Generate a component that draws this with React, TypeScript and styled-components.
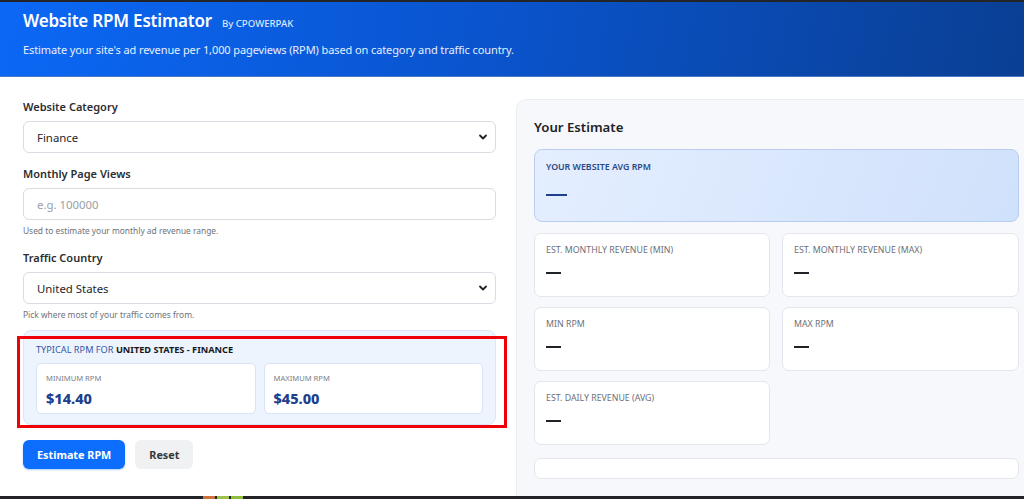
import styled, { createGlobalStyle } from "styled-components";

const GlobalStyle = createGlobalStyle`
  html, body {
    margin: 0;
    padding: 0;
    background: #ffffff;
    font-family: "Noto Sans", "Open Sans", Arial, sans-serif;
    color: #222;
  }
  * { box-sizing: border-box; }
`;

const Page = styled.div`
  position: relative;
  width: 1024px;
  height: 499px;
  overflow: hidden;
  border-top: 2px solid #232427;
  background: #fff;
`;

const Header = styled.header`
  height: 75px;
  padding: 7px 23px 0;
  background: linear-gradient(100deg, #0b68f5 0%, #0a55d0 45%, #0a3f93 100%);
  border-bottom: 1px solid #4a78c4;
  color: #fff;
`;

const TitleRow = styled.div`
  display: flex;
  align-items: baseline;
  gap: 10px;
`;

const Title = styled.h1`
  margin: 0;
  font-size: 17px;
  font-weight: 600;
  letter-spacing: -0.2px;
`;

const Byline = styled.span`
  font-size: 9.6px;
  font-weight: 500;
  color: #dbe6fb;
`;

const Subtitle = styled.p`
  margin: 10px 0 0;
  font-size: 11px;
  letter-spacing: -0.1px;
  color: #e8efff;
`;

const Main = styled.main`
  display: flex;
  gap: 20px;
  padding: 22px 0 0 23px;
`;

const Form = styled.section`
  width: 473px;
  flex-shrink: 0;
  display: flex;
  flex-direction: column;
`;

const Field = styled.div<{ $mb?: number }>`
  display: flex;
  flex-direction: column;
  margin-bottom: ${(p) => p.$mb ?? 13}px;
`;

const Label = styled.label`
  font-size: 11px;
  font-weight: 600;
  color: #2b2d31;
  margin-bottom: 7px;
`;

const Control = styled.div`
  position: relative;
  height: 32px;
  border: 1px solid #d8dce3;
  border-radius: 6px;
  background: #fff;
  display: flex;
  align-items: center;
  padding: 0 13px;
  font-size: 11.4px;
  color: #23262b;
`;

const Placeholder = styled.span`
  color: #9aa0a8;
`;

const Chevron = styled.svg`
  margin-left: auto;
  margin-right: -6px;
`;

const Hint = styled.div`
  margin-top: 5px;
  font-size: 8.4px;
  color: #6d727a;
`;

const TypicalBox = styled.div`
  position: relative;
  margin-top: 10px;
  padding: 10px 12px 10px;
  background: #eef4fe;
  border: 1px solid #d9e5fa;
  border-radius: 8px;
`;

const TypicalHead = styled.div`
  font-size: 9.2px;
  color: #2f57a8;
  text-transform: uppercase;
  margin-top: 2px;
  margin-bottom: 7px;

  b {
    color: #15181d;
    font-weight: 700;
  }
`;

const RangeGrid = styled.div`
  display: grid;
  grid-template-columns: 1fr 1fr;
  gap: 8px;
`;

const RangeCard = styled.div`
  height: 51px;
  background: #fff;
  border: 1px solid #d9e3f6;
  border-radius: 5px;
  padding: 9px 9px 0;
`;

const RangeLabel = styled.div`
  font-size: 7.6px;
  color: #7a7f88;
  text-transform: uppercase;
`;

const RangeValue = styled.div`
  margin-top: 5px;
  font-size: 14.5px;
  font-weight: 800;
  color: #1d3f8d;
`;

const Annotation = styled.div`
  position: absolute;
  top: 5px;
  left: -7px;
  right: -12px;
  bottom: -4px;
  border: 3px solid #f00008;
  pointer-events: none;
`;

const Actions = styled.div`
  display: flex;
  gap: 10px;
  margin-top: 15px;
`;

const Button = styled.button<{ $primary?: boolean }>`
  height: 29px;
  padding: 0 14px;
  border: none;
  border-radius: 6px;
  font-family: inherit;
  font-size: 10.8px;
  font-weight: 700;
  background: ${(p) => (p.$primary ? "#0d6efd" : "#f0f1f3")};
  color: ${(p) => (p.$primary ? "#fff" : "#33363b")};
  box-shadow: ${(p) => (p.$primary ? "0 1px 2px rgba(13,110,253,.35)" : "none")};
`;

const Results = styled.section`
  width: 540px;
  flex-shrink: 0;
  height: 420px;
  background: #f7f8fb;
  border: 1px solid #eceef3;
  border-radius: 10px;
  padding: 18px 17px 0 17px;
`;

const ResultsTitle = styled.h2`
  margin: 0 0 13px;
  font-size: 13.2px;
  font-weight: 600;
  color: #1f2227;
`;

const AvgCard = styled.div`
  width: 485px;
  height: 73px;
  border: 1px solid #b9cdf2;
  border-radius: 8px;
  background: linear-gradient(110deg, #e4eeff 0%, #d0e1fb 100%);
  padding: 11px 11px 0;
`;

const AvgLabel = styled.div`
  font-size: 8.8px;
  font-weight: 600;
  color: #2a4886;
  text-transform: uppercase;
`;

const Dash = styled.div<{ $size: number; $color: string }>`
  width: ${(p) => p.$size}px;
  height: 2px;
  background: ${(p) => p.$color};
`;

const AvgDashWrap = styled.div`
  margin-top: 21px;
`;

const StatGrid = styled.div`
  display: grid;
  grid-template-columns: 236px 237px;
  gap: 10px 12px;
  margin-top: 11px;
`;

const StatCard = styled.div`
  height: 64px;
  background: #fff;
  border: 1px solid #e3e6ec;
  border-radius: 7px;
  padding: 10px 11px 0;
`;

const StatLabel = styled.div`
  font-size: 8.8px;
  color: #6a6f78;
  text-transform: uppercase;
  margin-bottom: 16px;
`;

const Note = styled.div`
  height: 21px;
  margin-top: 13px;
  width: 485px;
  background: #fff;
  border: 1px solid #e3e6ec;
  border-radius: 7px;
`;

const Taskbar = styled.div`
  position: absolute;
  left: 0;
  right: 0;
  bottom: 0;
  height: 3px;
  background: #222326;
  display: flex;
  padding-left: 203px;
  gap: 2px;
`;

const TaskIcon = styled.span<{ $c: string }>`
  width: 12px;
  background: ${(p) => p.$c};
`;

const ChevronIcon = () => (
  <Chevron width="10" height="10" viewBox="0 0 10 10">
    <path d="M2 3.5 L5 6.5 L8 3.5" fill="none" stroke="#222" strokeWidth="1.8" strokeLinecap="round" strokeLinejoin="round" />
  </Chevron>
);

const stats = [
  "Est. Monthly Revenue (Min)",
  "Est. Monthly Revenue (Max)",
  "Min RPM",
  "Max RPM",
  "Est. Daily Revenue (Avg)",
];

export default function App() {
  return (
    <>
      <GlobalStyle />
      <Page>
        <Header>
          <TitleRow>
            <Title>Website RPM Estimator</Title>
            <Byline>By CPOWERPAK</Byline>
          </TitleRow>
          <Subtitle>
            Estimate your site's ad revenue per 1,000 pageviews (RPM) based on category and traffic country.
          </Subtitle>
        </Header>
        <Main>
          <Form>
            <Field>
              <Label>Website Category</Label>
              <Control>
                Finance
                <ChevronIcon />
              </Control>
            </Field>
            <Field $mb={14}>
              <Label>Monthly Page Views</Label>
              <Control>
                <Placeholder>e.g. 100000</Placeholder>
              </Control>
              <Hint>Used to estimate your monthly ad revenue range.</Hint>
            </Field>
            <Field $mb={0}>
              <Label>Traffic Country</Label>
              <Control>
                United States
                <ChevronIcon />
              </Control>
              <Hint>Pick where most of your traffic comes from.</Hint>
            </Field>
            <TypicalBox>
              <TypicalHead>
                Typical RPM for <b>United States - Finance</b>
              </TypicalHead>
              <RangeGrid>
                <RangeCard>
                  <RangeLabel>Minimum RPM</RangeLabel>
                  <RangeValue>$14.40</RangeValue>
                </RangeCard>
                <RangeCard>
                  <RangeLabel>Maximum RPM</RangeLabel>
                  <RangeValue>$45.00</RangeValue>
                </RangeCard>
              </RangeGrid>
              <Annotation />
            </TypicalBox>
            <Actions>
              <Button $primary>Estimate RPM</Button>
              <Button>Reset</Button>
            </Actions>
          </Form>
          <Results>
            <ResultsTitle>Your Estimate</ResultsTitle>
            <AvgCard>
              <AvgLabel>Your Website Avg RPM</AvgLabel>
              <AvgDashWrap>
                <Dash $size={21} $color="#1d3f8d" />
              </AvgDashWrap>
            </AvgCard>
            <StatGrid>
              {stats.map((s) => (
                <StatCard key={s}>
                  <StatLabel>{s}</StatLabel>
                  <Dash $size={15} $color="#1f2227" />
                </StatCard>
              ))}
            </StatGrid>
            <Note />
          </Results>
        </Main>
        <Taskbar>
          <TaskIcon $c="#c9733a" />
          <TaskIcon $c="#9cc24a" />
          <TaskIcon $c="#8fbf3a" />
        </Taskbar>
      </Page>
    </>
  );
}
